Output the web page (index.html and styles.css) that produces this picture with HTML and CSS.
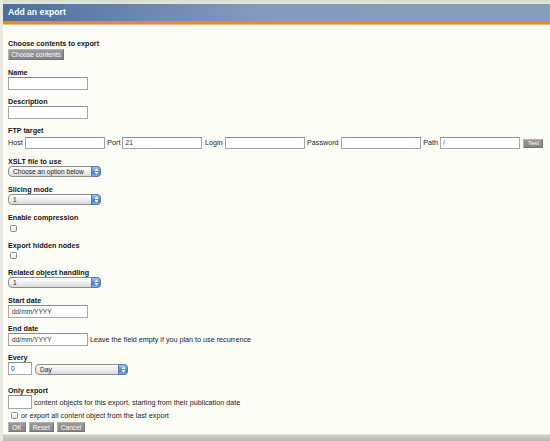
FILE: index.html
```html
<!DOCTYPE html>
<html>
<head>
<meta charset="utf-8">
<title>Add an export</title>
<link rel="stylesheet" href="styles.css">
</head>
<body>
<div class="page">
  <div class="topstrip"></div>
  <h1 class="header">Add an export</h1>
  <form class="form">
    <div class="field">
      <div class="lbl">Choose contents to export</div>
      <button type="button" class="btn btn-wide">Choose contents</button>
    </div>
    <div class="field">
      <div class="lbl">Name</div>
      <input class="txt" type="text">
    </div>
    <div class="field">
      <div class="lbl">Description</div>
      <input class="txt" type="text">
    </div>
    <div class="field field-ftp">
      <div class="lbl">FTP target</div>
      <div class="ftp-row">
        <span class="inl">Host</span><input class="txt txt-ftp" type="text">
        <span class="inl">Port</span><input class="txt txt-ftp" type="text" value="21">
        <span class="inl">Login</span><input class="txt txt-ftp" type="text">
        <span class="inl">Password</span><input class="txt txt-ftp" type="text">
        <span class="inl">Path</span><input class="txt txt-ftp" type="text" value="/">
        <button type="button" class="btn btn-test">Test</button>
      </div>
    </div>
    <div class="field field-sel">
      <div class="lbl">XSLT file to use</div>
      <span class="sel"><select><option>Choose an option below</option></select><span class="step"><svg width="5" height="7" viewBox="0 0 5 7"><path d="M0.5 3L2.5 0.6L4.5 3Z M0.5 4L2.5 6.4L4.5 4Z" fill="#fff"/></svg></span></span>
    </div>
    <div class="field field-sel">
      <div class="lbl">Slicing mode</div>
      <span class="sel"><select><option>1</option></select><span class="step"><svg width="5" height="7" viewBox="0 0 5 7"><path d="M0.5 3L2.5 0.6L4.5 3Z M0.5 4L2.5 6.4L4.5 4Z" fill="#fff"/></svg></span></span>
    </div>
    <div class="field field-chk">
      <div class="lbl">Enable compression</div>
      <input class="chk" type="checkbox">
    </div>
    <div class="field field-chk">
      <div class="lbl">Export hidden nodes</div>
      <input class="chk" type="checkbox">
    </div>
    <div class="field field-sel">
      <div class="lbl">Related object handling</div>
      <span class="sel"><select><option>1</option></select><span class="step"><svg width="5" height="7" viewBox="0 0 5 7"><path d="M0.5 3L2.5 0.6L4.5 3Z M0.5 4L2.5 6.4L4.5 4Z" fill="#fff"/></svg></span></span>
    </div>
    <div class="field field-date">
      <div class="lbl">Start date</div>
      <input class="txt" type="text" value="dd/mm/YYYY">
    </div>
    <div class="field field-date">
      <div class="lbl">End date</div>
      <div class="row">
        <input class="txt" type="text" value="dd/mm/YYYY">
        <span class="note">Leave the field empty if you plan to use recurrence</span>
      </div>
    </div>
    <div class="field field-every">
      <div class="lbl">Every</div>
      <div class="row">
        <input class="txt txt-small" type="text" value="0">
        <span class="sel sel-day"><select><option>Day</option></select><span class="step"><svg width="5" height="7" viewBox="0 0 5 7"><path d="M0.5 3L2.5 0.6L4.5 3Z M0.5 4L2.5 6.4L4.5 4Z" fill="#fff"/></svg></span></span>
      </div>
    </div>
    <div class="field field-only">
      <div class="lbl">Only export</div>
      <div class="row">
        <input class="txt txt-small txt-tall" type="text">
        <span class="note">content objects for this export, starting from their publication date</span>
      </div>
      <div class="row row-chk">
        <input class="chk" type="checkbox">
        <span class="note">or export all content object from the last export</span>
      </div>
    </div>
    <div class="actions">
      <button type="button" class="btn">OK</button>
      <button type="button" class="btn">Reset</button>
      <button type="button" class="btn">Cancel</button>
    </div>
  </form>
  <div class="footer"></div>
</div>
</body>
</html>
```

FILE: styles.css
```css
html, body {
  margin: 0;
  padding: 0;
  background: #fdfdf7;
}
body {
  font-family: "Liberation Sans", Arial, sans-serif;
  font-size: 7.2px;
  color: #222;
}
.page {
  width: 550px;
  height: 441px;
  box-sizing: border-box;
  border-left: 3px solid #e8eae2;
  display: flex;
  flex-direction: column;
  overflow: hidden;
}
.topstrip {
  height: 4px;
  background: linear-gradient(#d6dccb, #e6e9dd);
}
.header {
  margin: 0;
  height: 17px;
  line-height: 17px;
  padding-left: 5px;
  font-size: 8.6px;
  font-weight: bold;
  color: #fff;
  background: linear-gradient(to right, #4b6e9c 0, #6986ad 130px, #879cba 270px, #889dba 100%);
  border-bottom: 3px solid #d8922c;
  box-shadow: 0 1px 0 #ecc27e;
}
.form {
  padding: 15px 0 0 5px;
  display: flex;
  flex-direction: column;
  align-items: flex-start;
}
.field {
  display: flex;
  flex-direction: column;
  align-items: flex-start;
  margin-bottom: 7px;
}
.field:first-child {
  margin-bottom: 8px;
}
.lbl {
  font-weight: bold;
  color: #151515;
  line-height: 9px;
  height: 9px;
  white-space: nowrap;
}
.txt {
  box-sizing: border-box;
  width: 80px;
  height: 13px;
  margin: 0;
  padding: 0 0 0 3px;
  border: 1px solid #a6a6a6;
  border-top-color: #8c8c8c;
  background: #fff;
  font-family: "Liberation Sans", Arial, sans-serif;
  font-size: 6.6px;
  color: #333;
  outline: none;
}
.btn {
  box-sizing: border-box;
  height: 11px;
  margin: 0;
  padding: 0 3px;
  border: 1px solid #b4b4b0;
  border-right-color: #777;
  border-bottom-color: #777;
  background: linear-gradient(#9a9a9a, #858585);
  color: #fff;
  font-family: "Liberation Sans", Arial, sans-serif;
  font-size: 6.6px;
  line-height: 9px;
  white-space: nowrap;
}
.btn-wide {
  width: 56px;
  padding: 0;
  margin-top: 0.5px;
}
.field-ftp {
  margin-bottom: 8px;
}
.ftp-row {
  display: flex;
  align-items: center;
  height: 13px;
  margin-top: 1.5px;
}
.inl {
  margin-right: 2px;
}
.txt-ftp {
  width: 80px;
  height: 12px;
  padding-left: 2px;
  margin-right: 2.5px;
}
.btn-test {
  width: 20px;
  height: 9px;
  padding: 0;
  margin-left: 1px;
  margin-top: 2px;
  font-size: 6px;
  line-height: 7px;
}
.field-sel {
  margin-bottom: 8px;
}
.sel {
  position: relative;
  display: inline-block;
  width: 93px;
  height: 11px;
}
.sel select {
  -webkit-appearance: none;
  appearance: none;
  box-sizing: border-box;
  width: 93px;
  height: 11px;
  margin: 0;
  padding: 0 0 0 4px;
  border: 1px solid #8e8e8e;
  border-radius: 4px;
  background: linear-gradient(#ffffff, #f0f0f0 50%, #d9d9d9);
  font-family: "Liberation Sans", Arial, sans-serif;
  font-size: 6.6px;
  line-height: 9px;
  color: #222;
  outline: none;
}
.step {
  position: absolute;
  top: 0;
  right: 0;
  width: 10px;
  height: 11px;
  box-sizing: border-box;
  border: 1px solid #5a78a8;
  border-radius: 0 4px 4px 0;
  background: linear-gradient(#a8c6ee, #5a8fd8 50%, #3f78cc 55%, #7eb0ec);
  display: flex;
  align-items: center;
  justify-content: center;
  pointer-events: none;
}
.step svg {
  display: block;
}
.field-chk {
  margin-bottom: 9px;
}
.chk {
  -webkit-appearance: none;
  appearance: none;
  box-sizing: border-box;
  width: 7px;
  height: 7px;
  margin: 2.5px 0 0 2px;
  border: 1px solid #8a8a8a;
  border-radius: 1.5px;
  background: linear-gradient(#fff, #e8e8e8);
}
.field-date {
  margin-bottom: 6px;
}
.row {
  display: flex;
  align-items: center;
}
.note {
  margin-left: 2px;
  line-height: 9px;
}
.field-every {
  margin-bottom: 11px;
}
.field-every .lbl {
  margin-top: 1px;
}
.txt-small {
  width: 24px;
  padding-left: 2px;
}
.sel-day {
  margin-left: 3px;
  margin-top: 2px;
}
.field-only {
  margin-bottom: 2px;
}
.txt-tall {
  height: 14px;
}
.row-chk {
  margin-top: 2px;
}
.row-chk .chk {
  margin: 0 2px 0 3px;
}
.row-chk .note {
  margin-left: 1px;
}
.actions {
  display: flex;
  gap: 3px;
}
.actions .btn {
  height: 10px;
  padding: 0 3px;
}
.footer {
  margin-top: auto;
  height: 6px;
  border-top: 1px solid #e4e4dc;
  background: linear-gradient(#cfd0c8, #b8b9b1);
}
```
